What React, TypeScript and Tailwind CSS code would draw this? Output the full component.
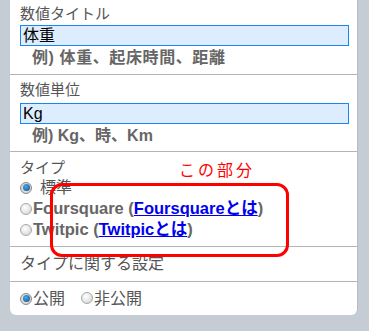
import React from "react";

const font = { fontFamily: '"Liberation Sans", "Noto Sans CJK JP", sans-serif' };

function Radio({ checked }: { checked?: boolean }) {
  return (
    <span
      className={
        "inline-flex items-center justify-center w-[12px] h-[12px] rounded-full shrink-0 border " +
        (checked
          ? "border-[#8a8a8a] bg-[radial-gradient(circle,#eaeaea_0%,#cfcfcf_100%)]"
          : "border-[#a8a8a8] bg-[radial-gradient(circle_at_40%_35%,#ffffff_0%,#d0d0d0_100%)]")
      }
    >
      {checked && (
        <span className="block w-[7px] h-[7px] rounded-full bg-[radial-gradient(circle_at_40%_35%,#4aa8e8_0%,#0a4f8c_100%)]" />
      )}
    </span>
  );
}

export default function App() {
  return (
    <div
      className="w-[369px] h-[331px] bg-[#c5ccd4] overflow-hidden"
      style={font}
    >
      <div className="relative ml-[10px] w-[348px] h-[315px] bg-white rounded-b-[6px] border-r border-[#b8bcc2]">
        {/* row 1 */}
        <div className="h-[75px] border-b border-[#b4b4b4] pl-[10px] pr-[8px]">
          <div className="h-[25px] pt-[5px] text-[15px] leading-[18px] text-[#555]">
            数値タイトル
          </div>
          <div className="h-[21px] border border-[#1a85f5] bg-[#ddedfe] text-[16px] leading-[19px] text-black pl-[2px]">
            体重
          </div>
          <div className="pl-[12px] pt-[2px] text-[16px] leading-[19px] font-bold tracking-[0.6px] text-[#666]">
            例) 体重、起床時間、距離
          </div>
        </div>
        {/* row 2 */}
        <div className="h-[77px] border-b border-[#b4b4b4] pl-[10px] pr-[8px]">
          <div className="h-[28px] pt-[6px] text-[15px] leading-[18px] text-[#555]">
            数値単位
          </div>
          <div className="h-[21px] border border-[#1a85f5] bg-[#ddedfe] text-[16px] leading-[19px] text-black pl-[2px]">
            Kg
          </div>
          <div className="pl-[12px] pt-[2px] text-[16px] leading-[19px] font-bold text-[#666]">
            例) Kg、時、Km
          </div>
        </div>
        {/* row 3 */}
        <div className="h-[95px] border-b border-[#b4b4b4] pl-[10px] pt-[7px]">
          <div className="text-[15px] leading-[18px] text-[#555]">タイプ</div>
          <div className="flex items-center h-[21px] text-[16px] text-[#555]">
            <Radio checked />
            <span className="ml-[8px]">標準</span>
          </div>
          <div className="flex items-center h-[21px] text-[16.5px] font-bold text-[#666]">
            <Radio />
            <span className="ml-[1px]">
              Foursquare (
              <a className="text-[#0000ee] underline">Foursquareとは</a>)
            </span>
          </div>
          <div className="flex items-center h-[21px] text-[16.5px] font-bold text-[#666]">
            <Radio />
            <span className="ml-[1px]">
              Twitpic (<a className="text-[#0000ee] underline">Twitpicとは</a>)
            </span>
          </div>
        </div>
        {/* row 4 */}
        <div className="h-[35px] border-b border-[#b4b4b4] pl-[10px] flex items-center text-[16px] text-[#555]">
          タイプに関する設定
        </div>
        {/* row 5 */}
        <div className="h-[33px] pl-[10px] flex items-center text-[16px] text-[#555]">
          <Radio checked />
          <span className="ml-[1px]">公開</span>
          <span className="ml-[16px]">
            <Radio />
          </span>
          <span className="ml-[1px]">非公開</span>
        </div>

        {/* annotation */}
        <div className="absolute left-[169px] top-[161px] text-[16px] leading-[20px] tracking-[3px] text-[#ff0000]">
          この部分
        </div>
        <div className="absolute left-[40px] top-[183px] w-[239px] h-[74px] border-[3px] border-[#ff0000] rounded-[12px]" />
      </div>
    </div>
  );
}
